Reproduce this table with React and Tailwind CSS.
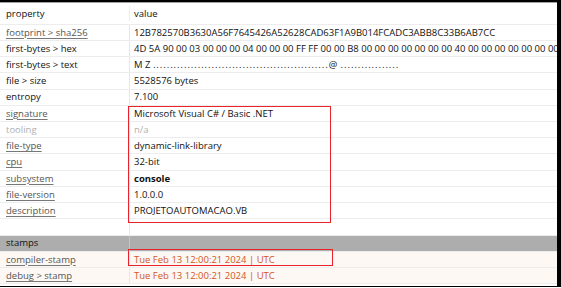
const HEX =
  "4D 5A 90 00 03 00 00 00 04 00 00 00 FF FF 00 00 B8 00 00 00 00 00 00 00 40 00 00 00 00 00 00 00 00 00 00 00 00 00 00 00 00 00 00 00 00 00 00 00";

const rows = [
  { k: "footprint > sha256", link: true, v: "12B782570B3630A56F7645426A52628CAD63F1A9B014FCADC3ABB8C33B6AB7CC" },
  { k: "first-bytes > hex", v: HEX },
  { k: "first-bytes > text", v: "", bytes: true },
  { k: "file > size", v: "5528576 bytes" },
  { k: "entropy", v: "7.100" },
  { k: "signature", link: true, v: "Microsoft Visual C# / Basic .NET" },
  { k: "tooling", muted: true, v: "n/a", vMuted: true },
  { k: "file-type", link: true, v: "dynamic-link-library" },
  { k: "cpu", link: true, v: "32-bit" },
  { k: "subsystem", link: true, v: "console", bold: true },
  { k: "file-version", link: true, v: "1.0.0.0" },
  { k: "description", link: true, v: "PROJETOAUTOMACAO.VB" },
  { k: "", v: "" },
  { k: "stamps", v: "", section: true },
  { k: "compiler-stamp", link: true, v: "Tue Feb 13 12:00:21 2024 | UTC", stamp: true },
  { k: "debug > stamp", link: true, v: "Tue Feb 13 12:00:21 2024 | UTC", stamp: true },
];

function ByteText() {
  return (
    <span className="text-[#111]">
      M Z <span className="tracking-[0.95px]">{".".repeat(51)}</span>@
      <span className="tracking-[0.95px]"> {".".repeat(17)}</span>
    </span>
  );
}

function Row({ r }) {
  const bg = r.section ? "bg-[#adadad]" : r.stamp ? "bg-[#fdf8f3]" : "bg-white";
  const keyCls = r.link
    ? "text-[#555] underline decoration-[#777] underline-offset-[2px]"
    : r.muted
    ? "text-[#b0b0b0]"
    : "text-[#111]";
  const valCls = r.stamp
    ? "text-[#d2561c]"
    : r.vMuted
    ? "text-[#b0b0b0]"
    : r.bold
    ? "text-[#111] font-bold"
    : "text-[#111]";
  return (
    <div className={`flex h-[16.23px] shrink-0 border-b border-[#ededed] ${bg}`}>
      <div className="flex w-[129px] shrink-0 items-center pl-[6px]">
        <span className={keyCls}>{r.k}</span>
      </div>
      <div className={`w-px shrink-0 ${r.section ? "bg-[#c4c4c4]" : "bg-[#e6e6e6]"}`} />
      <div className="flex min-w-0 flex-1 items-center overflow-hidden whitespace-nowrap pl-[4px]">
        {r.bytes ? <ByteText /> : <span className={valCls}>{r.v}</span>}
      </div>
    </div>
  );
}

export default function App() {
  return (
    <div
      className="relative h-[288px] w-[561px] overflow-hidden bg-white text-[9.5px] leading-none"
      style={{ fontFamily: '"Open Sans", sans-serif' }}
    >
      <div className="flex h-[287px] flex-col border-t-2 border-r-4 border-b-[1.5px] border-black">
        <div className="h-px shrink-0 bg-[#a0a0a0]" />
        <div className="flex h-[21.7px] shrink-0 border-b border-[#ededed]">
          <div className="flex w-[129px] shrink-0 items-center pl-[6px] text-[#111]">property</div>
          <div className="my-[3px] w-px shrink-0 bg-[#ededed]" />
          <div className="flex flex-1 items-center pl-[4px] text-[#111]">value</div>
        </div>
        {rows.map((r, i) => (
          <Row key={i} r={r} />
        ))}
      </div>

      {/* annotation boxes */}
      <div className="absolute left-[128px] top-[105.5px] h-[117px] w-[203px] border border-[#e8232b]" />
      <div className="absolute left-[128px] top-[249px] h-[17px] w-[205px] border border-[#e8232b]" />
    </div>
  );
}
